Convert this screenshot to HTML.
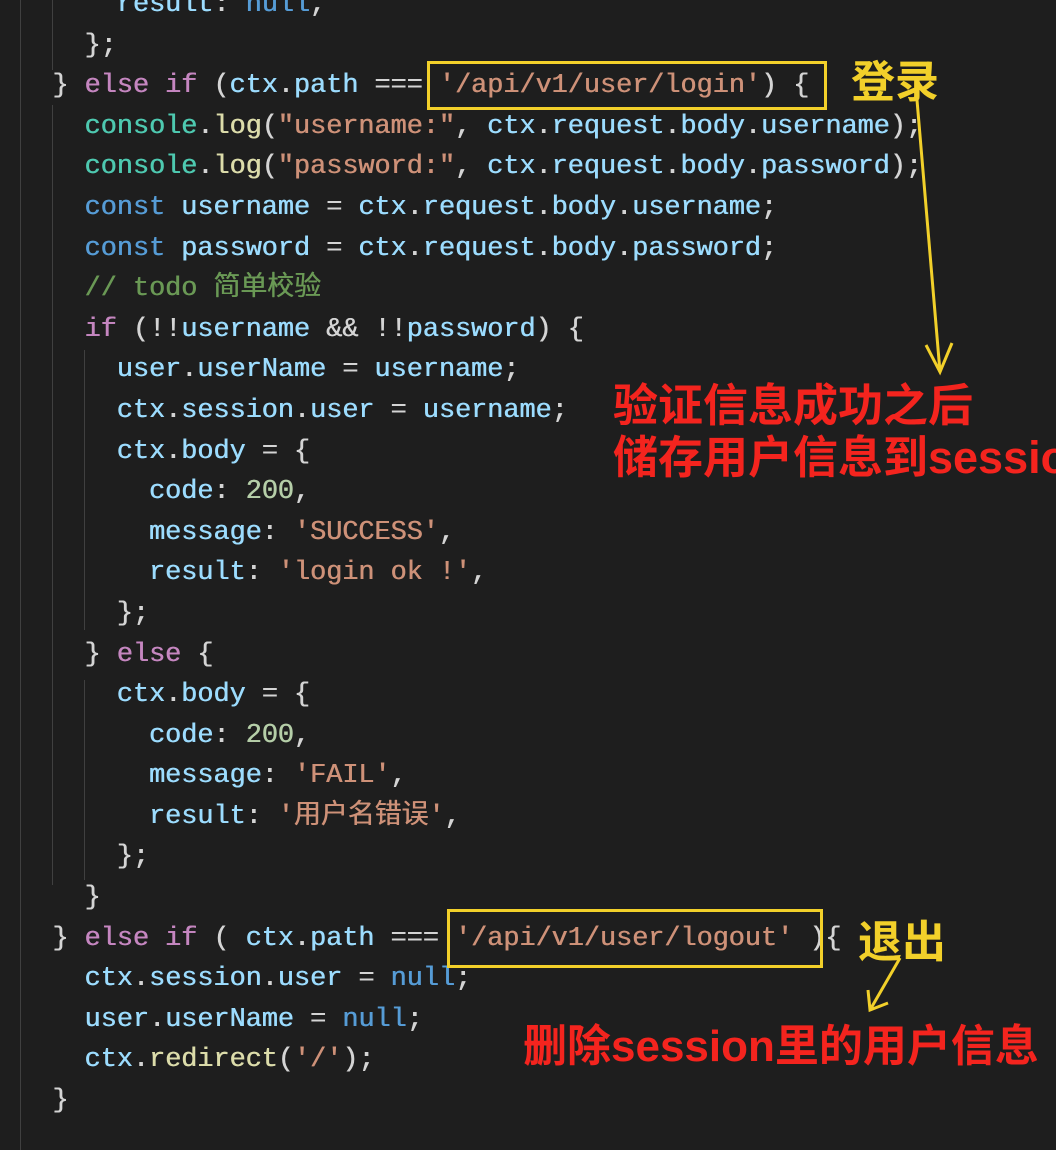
<!DOCTYPE html><html><head><meta charset="utf-8"><style>
body{margin:0;width:1056px;height:1150px;background:#1e1e1e;overflow:hidden;position:relative}
pre{position:absolute;left:20px;top:-15px;margin:0;font-family:"Liberation Mono","Noto Sans CJK SC",monospace;font-size:27px;line-height:40.6px;color:#d4d4d4;font-weight:normal;text-shadow:0.5px 0 0 currentColor;letter-spacing:-0.1px}
.k{color:#c586c0}.v{color:#9cdcfe}.c{color:#569cd6}.s{color:#ce9178}.f{color:#dcdcaa}.g{color:#4ec9b0}.n{color:#b5cea8}.m{color:#6a9955}
.g1{position:absolute;width:1px;background:#404040}
.box{position:absolute;border:3px solid #f2d02a}
.a{position:absolute;font-family:"Liberation Sans","Noto Sans CJK SC",sans-serif;font-weight:bold;white-space:nowrap}
</style></head><body>
<div class="g1" style="left:20px;top:0;height:1150px"></div>
<div class="g1" style="left:52px;top:0;height:70px"></div>
<div class="g1" style="left:52px;top:105px;height:780px"></div>
<div class="g1" style="left:84px;top:350px;height:280px"></div>
<div class="g1" style="left:84px;top:680px;height:200px"></div>
<pre>      <span class="v">result</span>: <span class="c">null</span>,
    };
  } <span class="k">else if</span> (<span class="v">ctx</span>.<span class="v">path</span> === <span class="s">'/api/v1/user/login'</span>) {
    <span class="g">console</span>.<span class="f">log</span>(<span class="s">"username:"</span>, <span class="v">ctx</span>.<span class="v">request</span>.<span class="v">body</span>.<span class="v">username</span>);
    <span class="g">console</span>.<span class="f">log</span>(<span class="s">"password:"</span>, <span class="v">ctx</span>.<span class="v">request</span>.<span class="v">body</span>.<span class="v">password</span>);
    <span class="c">const</span> <span class="v">username</span> = <span class="v">ctx</span>.<span class="v">request</span>.<span class="v">body</span>.<span class="v">username</span>;
    <span class="c">const</span> <span class="v">password</span> = <span class="v">ctx</span>.<span class="v">request</span>.<span class="v">body</span>.<span class="v">password</span>;
    <span class="m">// todo 简单校验</span>
    <span class="k">if</span> (!!<span class="v">username</span> &amp;&amp; !!<span class="v">password</span>) {
      <span class="v">user</span>.<span class="v">userName</span> = <span class="v">username</span>;
      <span class="v">ctx</span>.<span class="v">session</span>.<span class="v">user</span> = <span class="v">username</span>;
      <span class="v">ctx</span>.<span class="v">body</span> = {
        <span class="v">code</span>: <span class="n">200</span>,
        <span class="v">message</span>: <span class="s">'SUCCESS'</span>,
        <span class="v">result</span>: <span class="s">'login ok !'</span>,
      };
    } <span class="k">else</span> {
      <span class="v">ctx</span>.<span class="v">body</span> = {
        <span class="v">code</span>: <span class="n">200</span>,
        <span class="v">message</span>: <span class="s">'FAIL'</span>,
        <span class="v">result</span>: <span class="s">'用户名错误'</span>,
      };
    }
  } <span class="k">else if</span> ( <span class="v">ctx</span>.<span class="v">path</span> === <span class="s">'/api/v1/user/logout'</span> ){
    <span class="v">ctx</span>.<span class="v">session</span>.<span class="v">user</span> = <span class="c">null</span>;
    <span class="v">user</span>.<span class="v">userName</span> = <span class="c">null</span>;
    <span class="v">ctx</span>.<span class="f">redirect</span>(<span class="s">'/'</span>);
  }
</pre>
<div class="box" style="left:427px;top:61px;width:394px;height:43px"></div>
<div class="box" style="left:447px;top:909px;width:370px;height:53px"></div>
<div class="a" style="left:851px;top:46px;font-size:44px;color:#f2d02a">登录</div>
<div class="a" style="left:858px;top:906px;font-size:44px;color:#f2d02a">退出</div>
<div class="a" style="left:613px;top:380px;font-size:45px;color:#f4241e;line-height:52px">验证信息成功之后<br>储存用户信息到session</div>
<div class="a" style="left:523px;top:1010px;font-size:44px;color:#f4241e">删除session里的用户信息</div>
<svg style="position:absolute;left:0;top:0" width="1056" height="1150"><g stroke="#f2d02a" stroke-width="3" fill="none">
<path d="M917 100 L940 372 M926 345 L940 372 L952 343"/>
<path d="M900 958 L870 1010 M868 990 L870 1010 L888 1003"/></g></svg>
</body></html>
